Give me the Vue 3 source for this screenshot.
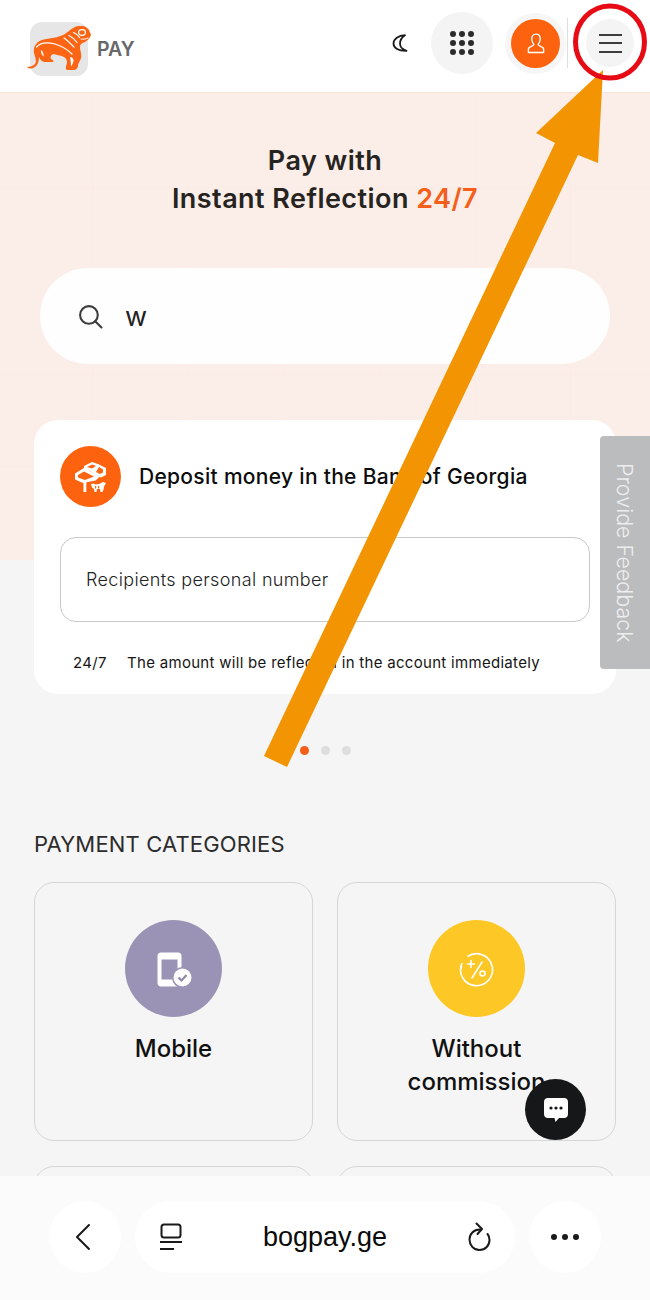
<script setup>
const categories = [
  { id: 'mobile', label: 'Mobile', color: '#9b93b6' },
  { id: 'free', label: 'Without commission', color: '#fdc725' },
  { id: 'a', label: '', color: '' },
  { id: 'b', label: '', color: '' },
]
const dots = [0, 1, 2]
</script>

<template>
  <div class="page">
    <header class="header">
      <div class="brand">
        <div class="logo">
          <svg class="tiger" viewBox="26 26 67 45" width="67" height="45">
            <path fill="#fb6514" d="M27 67C30 67 33 66 35 64C37 61 35 57 34 53C33 47 36 42 42 40C50 38 58 38 65 34C69 31 73 27 78 26C83 25 87 27 89 30L91 35C90 38 88 40 85 42C82 43 80 44 80 47C80 51 82 54 81 58C80 62 78 63 78 66C78 68 76 70 73 70L67 70C65 69 66 66 67 63C67 60 66 58 64 57C60 55 56 55 53 54C51 55 50 57 51 59C53 60 54 61 53 62L44 62C41 61 40 59 39 57C39 61 38 65 35 67C32 69 29 69 27 67Z"/>
            <path fill="none" stroke="#fff" stroke-width="1.200" stroke-linecap="round" d="M36.500 47C40 43 47 42 55 44C62 46 68 50 72 54M64 38C67 40 71 44 74 47M69 35.500C72 37 75 40 77 42.500M73.500 32.500C76 33.500 78 35 79.500 37.500"/>
            <ellipse cx="82" cy="32.500" rx="3.400" ry="2.800" fill="none" stroke="#fff" stroke-width="1.200"/>
            <path fill="none" stroke="#fff" stroke-width="1" stroke-linecap="round" d="M81 39C84 39.500 86 39 88 38"/>
            <path fill="#fff" d="M70 57C72 57 73.500 58.500 73.500 60C73.500 63 72 65 71 66.500C71 63 70.500 60 70 57ZM41 50C42.500 51 44 53.500 43.500 56.500C42 55 40.500 52.500 41 50Z"/>
          </svg>
        </div>
        <span class="pay">PAY</span>
      </div>
      <div class="actions">
        <svg class="moon" viewBox="0 0 16 18" width="16" height="18">
          <path fill="none" stroke="#1a1a1a" stroke-width="1.800" stroke-linejoin="round" d="M13 1.200C6.500 1.500 1.500 4.800 1.500 9.500S6.500 17 14.500 16.800C10.500 15.500 8 13 8 9.500S10 3.200 13 1.200z"/>
        </svg>
        <button class="round grid-btn">
          <svg viewBox="0 0 26 26" width="26" height="26">
            <g fill="#2b2b2b">
              <circle cx="4" cy="4" r="3"/><circle cx="13" cy="4" r="3"/><circle cx="22" cy="4" r="3"/>
              <circle cx="4" cy="13" r="3"/><circle cx="13" cy="13" r="3"/><circle cx="22" cy="13" r="3"/>
              <circle cx="4" cy="22" r="3"/><circle cx="13" cy="22" r="3"/><circle cx="22" cy="22" r="3"/>
            </g>
          </svg>
        </button>
        <div class="avatar-ring">
          <div class="avatar">
            <svg viewBox="0 0 20 24" width="18" height="23">
              <path fill="none" stroke="#fff" stroke-width="1.500" stroke-linejoin="round" d="M10 1.500c3 0 4.700 2.300 4.700 5.300 0 3-1.400 5.200-2.400 6 .2 1 .8 1.600 2.700 2.300 2.400.9 3.500 1.900 3.500 3.400v3.500H1.500v-3.500c0-1.500 1.100-2.500 3.500-3.400 1.900-.7 2.500-1.300 2.700-2.300-1-.8-2.400-3-2.400-6 0-3 1.700-5.300 4.700-5.300z"/>
            </svg>
          </div>
        </div>
        <span class="divider"></span>
        <button class="round menu-btn">
          <span></span><span></span><span></span>
        </button>
      </div>
    </header>

    <section class="hero">
      <h1 class="title">Pay with<br>Instant Reflection <em>24/7</em></h1>
      <div class="search">
        <svg viewBox="0 0 24 24" width="25" height="25">
          <circle cx="10.500" cy="10.500" r="8.500" fill="none" stroke="#3c3c3c" stroke-width="2"/>
          <path d="M16.500 16.500l6 6" stroke="#3c3c3c" stroke-width="2" stroke-linecap="round"/>
        </svg>
        <span class="query">w</span>
      </div>
    </section>

    <main class="content">
      <article class="card">
        <div class="card-head">
          <div class="card-icon">
            <svg viewBox="0 0 32 30" width="32" height="30">
              <path fill="#fff" d="M9 4l8-4 6 2 8 4v7l-5 2.500-6-3-5-3.500-6-1z"/>
              <path fill="#fb6514" d="M12 5l5-2.500 4 1.500-4 2.500zM24 5l4 2.500v3l-3 1.500-4-2z"/>
              <path fill="#fff" d="M0 11.500l9-5.500 16 8.500-4.500 4L8 21l-8-3.500z"/>
              <path fill="#fb6514" d="M3 13l6-3.500 10 5-9 3.500-7-2.500z"/>
              <path fill="#fff" d="M8.500 20h2.800v10H8.500zM16 22l3-.5 1 1 4-.5 4-2 3 1-2 3.500-.5 3-1 2.500h-2l-.5-3h-3l-.5 3h-2l-.5-3-2-1.500z"/>
              <path fill="#fb6514" d="M20 24h1.200v2.500H20zM23 24h1.200v2.500H23z"/>
            </svg>
          </div>
          <h2 class="card-title">Deposit money in the Bank of Georgia</h2>
        </div>
        <div class="field">Recipients personal number</div>
        <p class="note"><span class="note-time">24/7</span>The amount will be reflected in the account immediately</p>
      </article>

      <div class="dots">
        <i v-for="d in dots" :key="d" :class="{ on: d === 0 }"></i>
      </div>

      <h3 class="section-title">PAYMENT CATEGORIES</h3>
      <div class="grid">
        <div v-for="c in categories" :key="c.id" class="tile">
          <template v-if="c.label">
            <div class="tile-icon" :style="{ background: c.color }">
              <svg v-if="c.id === 'mobile'" viewBox="0 0 36 36" width="36" height="36">
                <path fill="#fff" fill-rule="evenodd" d="M5 1.500h17c2 0 3.500 1.500 3.500 3.500v30.500H5c-2 0-3.500-1.500-3.500-3.500V5c0-2 1.500-3.500 3.500-3.500zM5.500 8.500v20h16v-20z"/>
                <circle cx="26.500" cy="26.500" r="10.500" fill="#9b93b6"/>
                <circle cx="26.500" cy="26.500" r="9" fill="#fff"/>
                <path fill="none" stroke="#8f88a9" stroke-width="2.200" d="M22.500 26.500l3 3 5-5.500"/>
              </svg>
              <svg v-else viewBox="0 0 36 36" width="36" height="36" fill="none" stroke="#fff" stroke-width="1.600">
                <path d="M8.500 5.500A16 16 0 1 1 3 12M2.200 18c0-1.200.1-2.300.4-3.400"/>
                <path stroke-linecap="round" d="M8.500 13h7M12 9.500v7M13 27l10-16"/>
                <circle cx="23.500" cy="22.500" r="2.500"/>
              </svg>
            </div>
            <div class="tile-label">{{ c.label }}</div>
          </template>
        </div>
      </div>
    </main>

    <aside class="feedback"><span>Provide Feedback</span></aside>

    <button class="chat">
      <svg viewBox="0 0 26 26" width="26" height="26">
        <path fill="#fff" d="M5 1h16c2.500 0 4 1.500 4 4v12c0 2.500-1.500 4-4 4h-5l-3.500 4-1-4H5c-2.500 0-4-1.500-4-4V5c0-2.500 1.500-4 4-4z"/>
        <circle cx="8" cy="11" r="1.600" fill="#151718"/><circle cx="13" cy="11" r="1.600" fill="#151718"/><circle cx="18" cy="11" r="1.600" fill="#151718"/>
      </svg>
    </button>

    <nav class="browser">
      <button class="pill small back">
        <svg viewBox="0 0 18 28" width="18" height="30">
          <path fill="none" stroke="#1a1a1a" stroke-width="2" stroke-linecap="round" stroke-linejoin="round" d="M15 2L3 14l12 12"/>
        </svg>
      </button>
      <div class="pill url">
        <svg viewBox="0 0 24 28" width="24" height="28" fill="none" stroke="#1a1a1a" stroke-width="2">
          <rect x="2.500" y="1.500" width="19" height="13" rx="2.500"/>
          <path d="M1 19h22M1 26h14"/>
        </svg>
        <span class="domain">bogpay.ge</span>
        <svg viewBox="0 0 24 30" width="24" height="30" fill="none" stroke="#1a1a1a" stroke-width="2" stroke-linecap="round" stroke-linejoin="round">
          <path d="M13 7.500C6.500 7.500 2.500 12 2.500 17.500S6.500 28 12.500 28 22.500 23.500 22.500 18c0-2.500-.7-4.500-2-6"/>
          <path d="M9.500 1.500l5.500 5.500-4.500 5"/>
        </svg>
      </div>
      <button class="pill small">
        <svg viewBox="0 0 30 8" width="30" height="8" fill="#1a1a1a">
          <circle cx="4" cy="4" r="3"/><circle cx="15" cy="4" r="3"/><circle cx="26" cy="4" r="3"/>
        </svg>
      </button>
    </nav>

    <svg class="annotation" viewBox="0 0 650 1300" width="650" height="1300">
      <polygon fill="#f39503" points="603,70 598,163 578,155 287,767 264,756 555,143 536,133"/>
      <ellipse cx="610" cy="42" rx="34.500" ry="36" fill="none" stroke="#e60b14" stroke-width="5"/>
    </svg>
  </div>
</template>

<style>
body { margin: 0; }
</style>

<style scoped>
* { box-sizing: border-box; }
.page {
  position: relative;
  width: 650px;
  height: 1300px;
  overflow: hidden;
  background: #f5f5f5;
  font-family: "Inter", "Noto Sans", sans-serif;
  color: #111;
}
button { border: 0; padding: 0; font: inherit; }

.header {
  height: 92px;
  background: #fff;
  display: flex;
  align-items: center;
  justify-content: space-between;
  padding: 0 16px 0 27px;
}
.brand { display: flex; align-items: center; gap: 7px; margin-top: 6px; }
.logo {
  position: relative;
  width: 63px;
  height: 54px;
}
.logo::before {
  content: "";
  position: absolute;
  left: 3px;
  top: 0;
  width: 58px;
  height: 54px;
  border-radius: 12px;
  background: #e6e6e6;
}
.tiger { position: absolute; left: -1px; top: 4px; }
.pay { font-size: 19.500px; font-weight: 600; color: #67686a; }

.actions { display: flex; align-items: center; margin-top: -6px; }
.moon { margin-right: 23px; }
.round {
  display: flex;
  align-items: center;
  justify-content: center;
  border-radius: 50%;
  background: #f4f4f4;
}
.grid-btn { width: 62px; height: 62px; margin-right: 12px; }
.avatar-ring {
  width: 61px;
  height: 61px;
  border-radius: 50%;
  background: #f6f6f6;
  display: flex;
  align-items: center;
  justify-content: center;
}
.avatar {
  width: 49px;
  height: 49px;
  border-radius: 50%;
  background: #fd630f;
  display: flex;
  align-items: center;
  justify-content: center;
}
.divider { width: 1px; height: 50px; background: #dedede; margin: 0 18px 0 1px; }
.menu-btn {
  width: 48px;
  height: 48px;
  flex-direction: column;
  gap: 6.500px;
}
.menu-btn span { display: block; width: 23px; height: 2px; background: #3d3d3f; }

.hero {
  height: 468px;
  background-color: #fbeee8;
  background-image:
    linear-gradient(to right, #faebe4 1px, transparent 1px),
    linear-gradient(to bottom, #faebe4 1px, transparent 1px),
    linear-gradient(to bottom, #faebe4 1px, transparent 1px);
  background-size: 95.500px 100%, 100% 187px, 100% 1px;
  background-position: -3px 0, 0 94px, 0 373px;
  background-repeat: repeat, repeat, no-repeat;
  padding-top: 49px;
  border-top: 1px solid #fae3d9;
}
.title {
  margin: 0;
  text-align: center;
  font-size: 27px;
  line-height: 38px;
  font-weight: 600;
  letter-spacing: 0.45px;
  color: #27241f;
}
.title em { font-style: normal; color: #f4601a; }
.search {
  margin: 50px 40px 0;
  height: 96px;
  border-radius: 48px;
  background: #fefefe;
  display: flex;
  align-items: center;
  gap: 22px;
  padding: 0 38px;
}
.query { font-size: 27px; font-weight: 400; color: #222; }

.content { margin-top: -140px; padding: 0 34px; position: relative; }
.card {
  height: 274px;
  background: #fff;
  border-radius: 24px;
  padding: 26px 26px 0;
}
.card-head { display: flex; align-items: center; gap: 18px; height: 61px; }
.card-icon {
  width: 61px;
  height: 61px;
  border-radius: 50%;
  background: #fd630f;
  display: flex;
  align-items: center;
  justify-content: center;
}
.card-title { margin: 0; font-size: 21px; font-weight: 500; letter-spacing: 0.3px; color: #0c0c0c; white-space: nowrap; }
.field {
  margin-top: 30px;
  height: 85px;
  border: 1px solid #c9c9c9;
  border-radius: 16px;
  display: flex;
  align-items: center;
  padding-left: 25px;
  font-size: 18px;
  font-weight: 300;
  letter-spacing: 0.35px;
  color: #222;
}
.note { margin: 30px 0 0 13px; font-size: 15px; line-height: 22px; font-weight: 400; letter-spacing: 0.3px; color: #151515; white-space: nowrap; }
.note-time { display: inline-block; width: 54px; }

.dots { display: flex; justify-content: center; gap: 12px; margin-top: 52px; }
.dots i { width: 9px; height: 9px; border-radius: 50%; background: #dedede; }
.dots i.on { background: #f4601a; }

.section-title {
  margin: 74px 0 0;
  font-size: 22px;
  line-height: 30px;
  font-weight: 400;
  letter-spacing: 0.15px;
  color: #2c2c2c;
}
.grid {
  margin-top: 23px;
  display: grid;
  grid-template-columns: 279px 279px;
  column-gap: 24px;
  row-gap: 25px;
}
.tile {
  height: 259px;
  border: 1px solid #d6d6d6;
  border-radius: 20px;
  padding-top: 37px;
  display: flex;
  flex-direction: column;
  align-items: center;
}
.tile-icon {
  width: 97px;
  height: 97px;
  border-radius: 50%;
  display: flex;
  align-items: center;
  justify-content: center;
}
.tile-label {
  margin-top: 15px;
  width: 200px;
  text-align: center;
  font-size: 24px;
  line-height: 33px;
  font-weight: 500;
  color: #111;
}

.feedback {
  position: absolute;
  right: 0;
  top: 436px;
  width: 50px;
  height: 233px;
  background: #bbbcbe;
  border-radius: 4px 0 0 4px;
  display: flex;
  align-items: center;
  justify-content: center;
}
.feedback span {
  writing-mode: vertical-rl;
  font-size: 21.500px;
  font-weight: 300;
  color: #eeeeee;
  white-space: nowrap;
}

.chat {
  position: absolute;
  left: 525px;
  top: 1079px;
  width: 61px;
  height: 61px;
  border-radius: 50%;
  background: #151718;
  display: flex;
  align-items: center;
  justify-content: center;
  z-index: 2;
}

.browser {
  position: absolute;
  left: 0;
  right: 0;
  bottom: 0;
  height: 124px;
  background: #fbfbfb;
  display: flex;
  justify-content: center;
  gap: 14px;
  padding-top: 25px;
  z-index: 3;
}
.pill {
  height: 72px;
  background: #fff;
  border-radius: 36px;
  display: flex;
  align-items: center;
  justify-content: center;
}
.small { width: 72px; }
.back { padding-right: 4px; }
.url {
  width: 380px;
  justify-content: space-between;
  padding: 0 24px;
}
.domain {
  font-family: "Liberation Sans", Arial, sans-serif;
  font-size: 27px;
  color: #0b0b0b;
}

.annotation { position: absolute; left: 0; top: 0; z-index: 4; pointer-events: none; }
</style>
